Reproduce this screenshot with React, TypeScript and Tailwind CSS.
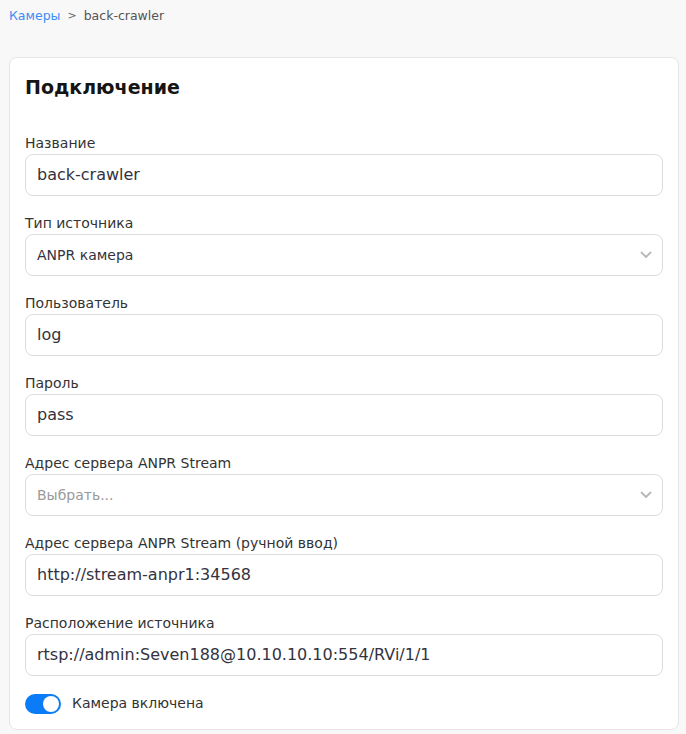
import React from "react";

const font = { fontFamily: '"DejaVu Sans", "Noto Sans", sans-serif' };

function Chevron() {
  return (
    <svg width="12" height="8" viewBox="0 0 12 8" fill="none" className="absolute right-[10px] top-1/2 -translate-y-1/2">
      <path d="M1.5 1.5 L6 6 L10.5 1.5" stroke="#b8b8b8" strokeWidth="1.8" strokeLinecap="round" strokeLinejoin="round" />
    </svg>
  );
}

function Field({ label, value, select, placeholder, small }: { label: string; value?: string; select?: boolean; placeholder?: string; small?: boolean }) {
  return (
    <div className="flex flex-col">
      <div className="text-[14px] leading-[20px] text-[#333333] mb-[1px]">{label}</div>
      <div className="relative h-[42px] rounded-[8px] border border-[#dcdcdc] bg-white flex items-center pl-[11px] pr-[36px]">
        {value ? (
          <span className={small ? "text-[14px] text-[#333340]" : "text-[16px] text-[#333340]"}>{value}</span>
        ) : (
          <span className="text-[14px] text-[#9a9a9a]">{placeholder}</span>
        )}
        {select && <Chevron />}
      </div>
    </div>
  );
}

export default function App() {
  return (
    <div className="min-h-[734px] bg-[#f8f8f8] pl-[9px] pr-[7px] pt-[7px] pb-[4px]" style={font}>
      <div className="flex items-center gap-[7px] text-[12.5px] leading-[18px] h-[18px]">
        <span className="text-[#3b8cf5]">Камеры</span>
        <span className="text-[#666666] text-[11px]">&gt;</span>
        <span className="text-[#555555]">back-crawler</span>
      </div>
      <div className="mt-[32px] bg-white border border-[#e6e6e6] rounded-[8px] px-[15px] pt-[15px] pb-[15px]">
        <div className="text-[19px] leading-[28px] font-semibold text-[#151515]">Подключение</div>
        <div className="mt-[32px] flex flex-col gap-[17px]">
          <Field label="Название" value="back-crawler" />
          <Field label="Тип источника" value="ANPR камера" select small />
          <Field label="Пользователь" value="log" />
          <Field label="Пароль" value="pass" />
          <Field label="Адрес сервера ANPR Stream" placeholder="Выбрать..." select />
          <Field label="Адрес сервера ANPR Stream (ручной ввод)" value="http://stream-anpr1:34568" />
          <Field label="Расположение источника" value="rtsp://admin:Seven188@10.10.10.10:554/RVi/1/1" />
        </div>
        <div className="mt-[17px] flex items-center gap-[11px]">
          <div className="relative w-[36px] h-[20px] rounded-full bg-[#0a7cf8]">
            <div className="absolute right-[2px] top-[2px] w-[16px] h-[16px] rounded-full bg-white" />
          </div>
          <span className="text-[14px] text-[#333333]">Камера включена</span>
        </div>
      </div>
    </div>
  );
}
